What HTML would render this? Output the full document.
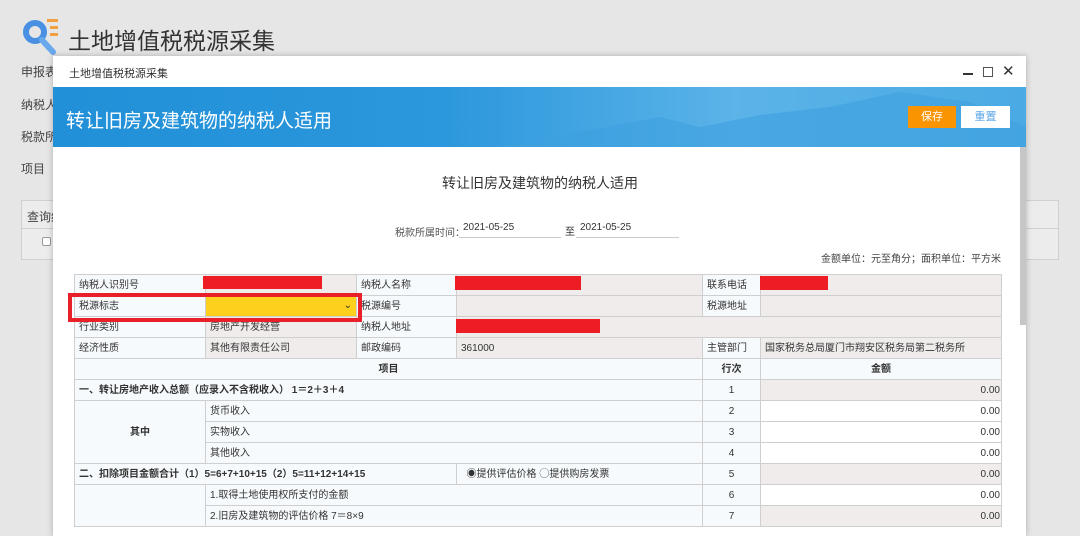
<!DOCTYPE html>
<html><head><meta charset="utf-8"><style>
*{margin:0;padding:0;box-sizing:border-box}
body{width:1080px;height:531px;overflow:hidden;background:#e6e6e6;font-family:"Liberation Sans","Noto Sans CJK SC",sans-serif;position:relative;color:#333}
.abs{position:absolute}
.bg{font-size:12px;color:#444}
table{border-collapse:collapse;table-layout:fixed;position:absolute;left:74px;top:274px;width:927px;font-size:10px;color:#333}
td{border:1px solid #cfcfcf;height:21px;padding:0 4px;white-space:nowrap;overflow:hidden;line-height:19px;vertical-align:middle}
.l{background:#f6fafc}
.v{background:#f0ecec}
.w{background:#fff}
.c{text-align:center}
.r{text-align:right;padding-right:1px}
.b{font-weight:bold}
.red{position:absolute;background:#ee1c25}
</style></head><body>
<svg class="abs" style="left:22px;top:17px" width="38" height="40" viewBox="0 0 38 40">
<circle cx="13" cy="15" r="9" fill="none" stroke="#4a90e2" stroke-width="6"/>
<line x1="20" y1="23" x2="31" y2="35" stroke="#6aa8ec" stroke-width="6" stroke-linecap="round"/>
<rect x="25" y="2" width="11" height="3" fill="#f0a040"/><rect x="28" y="9" width="8" height="3" fill="#f0a040"/><rect x="28" y="16" width="8" height="3" fill="#f0a040"/>
</svg>
<div class="abs" style="left:68px;top:22px;font-size:23px;color:#333">土地增值税税源采集</div>
<div class="abs bg" style="left:21px;top:63px">申报表</div>
<div class="abs bg" style="left:21px;top:96px">纳税人</div>
<div class="abs bg" style="left:21px;top:128px">税款所</div>
<div class="abs bg" style="left:21px;top:160px">项目（</div>
<div class="abs" style="left:21px;top:200px;width:1038px;height:60px;border:1px solid #d0d0d0;background:#ececec"></div>
<div class="abs" style="left:21px;top:228px;width:1038px;border-top:1px solid #d0d0d0"></div>
<div class="abs bg" style="left:27px;top:208px">查询结</div>
<div class="abs" style="left:42px;top:237px;width:9px;height:9px;border:1px solid #999;background:#fff;border-radius:2px"></div>

<div class="abs" style="left:53px;top:56px;width:973px;height:480px;background:#fff;box-shadow:0 0 6px rgba(0,0,0,.25)"></div>
<div class="abs" style="left:69px;top:65px;font-size:11px;color:#333">土地增值税税源采集</div>
<div class="abs" style="left:963px;top:73px;width:10px;height:2px;background:#333"></div>
<div class="abs" style="left:983px;top:67px;width:10px;height:10px;border:1px solid #555"></div>
<div class="abs" style="left:1002px;top:62px;font-size:15px;color:#333">✕</div>
<div class="abs" style="left:53px;top:87px;width:973px;height:60px;background:linear-gradient(90deg,#2190d8 0%,#2b97dc 40%,#5bb3e8 70%,#4aaae3 100%)"></div>
<svg class="abs" style="left:500px;top:87px" width="526" height="60" viewBox="0 0 526 60"><path d="M0 60 L80 45 L160 30 L200 40 L260 28 L330 20 L400 5 L470 15 L526 40 L526 60Z" fill="#3ea0e0" opacity=".6"/></svg>
<div class="abs" style="left:66px;top:106px;font-size:19px;color:#fff">转让旧房及建筑物的纳税人适用</div>
<div class="abs" style="left:908px;top:106px;width:48px;height:22px;background:#fa9400;color:#fff;font-size:11px;text-align:center;line-height:22px">保存</div>
<div class="abs" style="left:961px;top:106px;width:49px;height:22px;background:#fff;color:#5aa7e6;font-size:11px;text-align:center;line-height:22px">重置</div>
<div class="abs" style="left:1020px;top:147px;width:6px;height:178px;background:#c6c6c6"></div>
<div class="abs" style="left:0;top:173px;width:1080px;text-align:center;font-size:14px;color:#333">转让旧房及建筑物的纳税人适用</div>
<div class="abs" style="left:395px;top:224px;font-size:10px;color:#555">税款所属时间：</div>
<div class="abs" style="left:459px;top:222px;width:102px;border-bottom:1px solid #ccc;font-size:10px;padding:0 4px 4px">2021-05-25</div>
<div class="abs" style="left:565px;top:223px;font-size:10px">至</div>
<div class="abs" style="left:576px;top:222px;width:103px;border-bottom:1px solid #ccc;font-size:10px;padding:0 4px 4px">2021-05-25</div>
<div class="abs" style="left:700px;width:301px;text-align:right;top:250px;font-size:10px;color:#444">金额单位：元至角分；面积单位：平方米</div>

<table>
<colgroup><col style="width:131px"><col style="width:151px"><col style="width:100px"><col style="width:246px"><col style="width:58px"><col style="width:241px"></colgroup>
<tr><td class="l">纳税人识别号</td><td class="v"></td><td class="l">纳税人名称</td><td class="v"></td><td class="l">联系电话</td><td class="v"></td></tr>
<tr><td class="l">税源标志</td><td class="w" style="padding:0"><div style="background:#fcd01c;height:19px;text-align:right;padding-right:4px;font-size:10px;line-height:18px">⌄</div></td><td class="l">税源编号</td><td class="v"></td><td class="l">税源地址</td><td class="v"></td></tr>
<tr><td class="l">行业类别</td><td class="v">房地产开发经营</td><td class="l">纳税人地址</td><td class="v" colspan="3"></td></tr>
<tr><td class="l">经济性质</td><td class="v">其他有限责任公司</td><td class="l">邮政编码</td><td class="v">361000</td><td class="l">主管部门</td><td class="v">国家税务总局厦门市翔安区税务局第二税务所</td></tr>
<tr><td class="l c b" colspan="4">项目</td><td class="l c b">行次</td><td class="l c b">金额</td></tr>
<tr><td class="l b" colspan="4">一、转让房地产收入总额（应录入不含税收入） 1＝2＋3＋4</td><td class="l c">1</td><td class="v r">0.00</td></tr>
<tr><td class="l c b" rowspan="3">其中</td><td class="l" colspan="3">货币收入</td><td class="l c">2</td><td class="w r">0.00</td></tr>
<tr><td class="l" colspan="3">实物收入</td><td class="l c">3</td><td class="w r">0.00</td></tr>
<tr><td class="l" colspan="3">其他收入</td><td class="l c">4</td><td class="w r">0.00</td></tr>
<tr><td class="l b" colspan="3">二、扣除项目金额合计（1）5=6+7+10+15（2）5=11+12+14+15</td><td class="l">&nbsp;&nbsp;◉提供评估价格 ◯提供购房发票</td><td class="l c">5</td><td class="v r">0.00</td></tr>
<tr><td class="l" rowspan="2"></td><td class="l" colspan="3">1.取得土地使用权所支付的金额</td><td class="l c">6</td><td class="w r">0.00</td></tr>
<tr><td class="l" colspan="3">2.旧房及建筑物的评估价格 7＝8×9</td><td class="l c">7</td><td class="v r">0.00</td></tr>
</table>
<div class="red" style="left:203px;top:276px;width:119px;height:13px"></div>
<div class="red" style="left:455px;top:276px;width:126px;height:14px"></div>
<div class="red" style="left:760px;top:276px;width:68px;height:14px"></div>
<div class="red" style="left:456px;top:319px;width:144px;height:14px"></div>
<div class="abs" style="left:68px;top:293px;width:294px;height:29px;border:4px solid #e8202a"></div>
</body></html>
